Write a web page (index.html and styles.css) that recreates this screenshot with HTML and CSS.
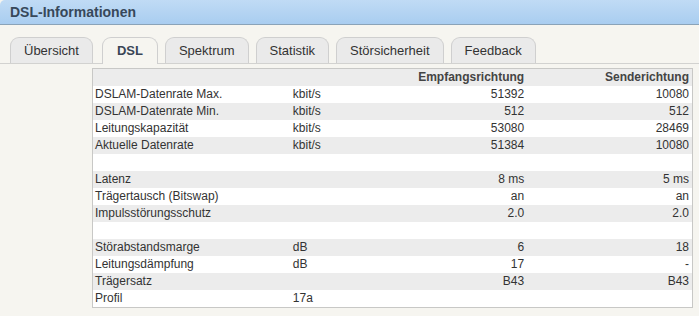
FILE: index.html
```html
<!DOCTYPE html>
<html lang="de">
<head>
  <meta charset="UTF-8" />
  <title>DSL-Informationen</title>
  <link rel="stylesheet" href="styles.css">
</head>
<body>

  <!-- Titelleiste -->
  <div class="titlebar">
    <h1>DSL-Informationen</h1>
  </div>

  <!-- Reiter -->
  <ul class="tabs">
    <li>Übersicht</li>
    <li class="active">DSL</li>
    <li>Spektrum</li>
    <li>Statistik</li>
    <li>Störsicherheit</li>
    <li>Feedback</li>
  </ul>

  <!-- Werte -->
  <table class="dsl">
    <colgroup>
      <col class="c-name">
      <col class="c-unit">
      <col class="c-rx">
      <col class="c-tx">
    </colgroup>
    <thead>
      <tr><th></th><th></th><th class="num">Empfangsrichtung</th><th class="num">Senderichtung</th></tr>
    </thead>
    <tbody>
      <tr><td>DSLAM-Datenrate Max.</td><td>kbit/s</td><td class="num">51392</td><td class="num">10080</td></tr>
      <tr><td>DSLAM-Datenrate Min.</td><td>kbit/s</td><td class="num">512</td><td class="num">512</td></tr>
      <tr><td>Leitungskapazität</td><td>kbit/s</td><td class="num">53080</td><td class="num">28469</td></tr>
      <tr><td>Aktuelle Datenrate</td><td>kbit/s</td><td class="num">51384</td><td class="num">10080</td></tr>
      <tr><td></td><td></td><td></td><td></td></tr>
      <tr><td>Latenz</td><td></td><td class="num">8 ms</td><td class="num">5 ms</td></tr>
      <tr><td>Trägertausch (Bitswap)</td><td></td><td class="num">an</td><td class="num">an</td></tr>
      <tr><td>Impulsstörungsschutz</td><td></td><td class="num">2.0</td><td class="num">2.0</td></tr>
      <tr><td></td><td></td><td></td><td></td></tr>
      <tr><td>Störabstandsmarge</td><td>dB</td><td class="num">6</td><td class="num">18</td></tr>
      <tr><td>Leitungsdämpfung</td><td>dB</td><td class="num">17</td><td class="num">-</td></tr>
      <tr><td>Trägersatz</td><td></td><td class="num">B43</td><td class="num">B43</td></tr>
      <tr><td>Profil</td><td>17a</td><td></td><td></td></tr>
    </tbody>
  </table>

</body>
</html>
```

FILE: styles.css
```css
body {
  margin: 0;
  background: #f6f5f0;
  font-family: "Liberation Sans", Arial, sans-serif;
  color: #333;
}

/* Titelleiste */
.titlebar {
  height: 24px;
  background: linear-gradient(to bottom, #c0dbf5, #a9cdf0);
  border-bottom: 1px solid #8aa3b8;
  border-top-left-radius: 5px;
}

.titlebar h1 {
  margin: 0;
  padding-left: 10px;
  font-size: 14px;
  line-height: 25px;
  color: #37485a;
}

/* Reiter */
.tabs {
  display: flex;
  gap: 7px;
  list-style: none;
  margin: 12px 0 0 0;
  padding: 0 0 0 10px;
  border-bottom: 1px solid #d2d2d0;
  height: 26px;
}

.tabs li {
  height: 25px;
  padding: 0 13px;
  font-size: 13px;
  line-height: 25px;
  color: #333;
  background: #eaeaea;
  border: 1px solid #cfcfcf;
  border-bottom: none;
  border-radius: 9px 9px 0 0;
}

.tabs li.active {
  height: 26px;
  margin-left: 2px;
  padding: 0 14px;
  background: #f6f5f0;
  font-weight: bold;
  color: #3a4656;
}

/* Tabelle */
.dsl {
  margin: 4px 0 0 92px;
  width: 601px;
  table-layout: fixed;
  border-collapse: collapse;
  border: 1px solid #c8c8c6;
  background: #fff;
  font-size: 12px;
}

.c-name { width: 198px; }
.c-unit { width: 100px; }
.c-rx { width: 136px; }
.c-tx { width: 165px; }

.dsl th,
.dsl td {
  height: 17px;
  padding: 0 2px;
  line-height: 17px;
  text-align: left;
  white-space: nowrap;
}

.dsl th {
  color: #444;
}

.dsl .num {
  text-align: right;
  padding-right: 3px;
}

.dsl thead tr,
.dsl tbody tr:nth-child(even) {
  background: #ececec;
}
```
